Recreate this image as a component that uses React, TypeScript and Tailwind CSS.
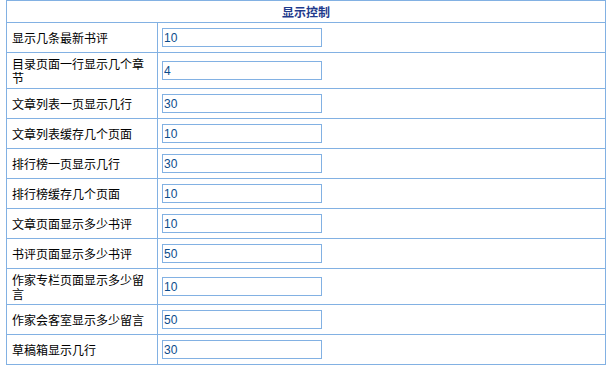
const rows: { label: string; value: string }[] = [
  { label: '显示几条最新书评', value: '10' },
  { label: '目录页面一行显示几个章节', value: '4' },
  { label: '文章列表一页显示几行', value: '30' },
  { label: '文章列表缓存几个页面', value: '10' },
  { label: '排行榜一页显示几行', value: '30' },
  { label: '排行榜缓存几个页面', value: '10' },
  { label: '文章页面显示多少书评', value: '10' },
  { label: '书评页面显示多少书评', value: '50' },
  { label: '作家专栏页面显示多少留言', value: '10' },
  { label: '作家会客室显示多少留言', value: '50' },
  { label: '草稿箱显示几行', value: '30' },
]

export default function App() {
  return (
    <div className="w-[612px] h-[366px] overflow-hidden bg-white pl-[6px] font-['Noto_Sans_CJK_SC',sans-serif] text-[12px] text-black">
      <table className="w-[600px] border-collapse table-fixed">
        <colgroup>
          <col className="w-[151px]" />
          <col />
        </colgroup>
        <thead>
          <tr>
            <th
              colSpan={2}
              className="h-[22px] p-0 border border-[#82b1e3] text-center font-bold text-[12px] leading-[14px] text-[#1e3a8c]"
            >
              显示控制
            </th>
          </tr>
        </thead>
        <tbody>
          {rows.map(row => (
            <tr key={row.label}>
              <td className="border border-[#82b1e3] pl-[5px] pr-[5px] pt-[4px] pb-[3px] leading-[14px] align-middle">
                {row.label}
              </td>
              <td className="border border-[#82b1e3] pl-[4px] py-[5px] align-middle">
                <input
                  readOnly
                  value={row.value}
                  className="block w-[160px] h-[19px] border border-[#82b1e3] px-[1px] text-[12px] leading-[17px] text-[#0b4c8c] font-['Liberation_Sans',sans-serif] outline-none bg-white"
                />
              </td>
            </tr>
          ))}
        </tbody>
      </table>
    </div>
  )
}
